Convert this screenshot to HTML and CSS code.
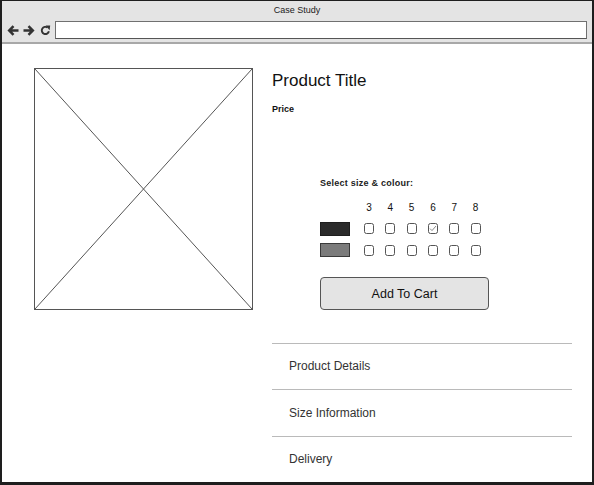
FILE: index.html
```html
<!DOCTYPE html>
<html>
<head>
<meta charset="utf-8">
<link rel="stylesheet" href="styles.css">
</head>
<body>
<div class="window">
  <div class="titlebar">Case Study</div>
  <div class="toolbar">
    <div class="nav">
      <svg class="ic-arrow" width="12" height="11" viewBox="0 0 12 11"><path d="M11.5 5.5H2.2M6.5 1.2L2.2 5.5L6.5 9.8" fill="none" stroke="#333" stroke-width="2.5"/></svg>
      <svg class="ic-arrow" width="12" height="11" viewBox="0 0 12 11"><path d="M0.5 5.5H9.8M5.5 1.2L9.8 5.5L5.5 9.8" fill="none" stroke="#333" stroke-width="2.5"/></svg>
      <svg class="ic-reload" width="11" height="11" viewBox="0 0 11 11"><path d="M8.9 6.2A3.6 3.6 0 1 1 7.6 2.6" fill="none" stroke="#333" stroke-width="1.9"/><path d="M5.6 0.4L10.2 0.6L9.6 5.2Z" fill="#333"/></svg>
    </div>
    <div class="address"></div>
  </div>
  <div class="page">
    <div class="image">
      <svg width="217" height="240" viewBox="0 0 217 240"><line x1="0" y1="0" x2="217" y2="240" stroke="#555" stroke-width="1"/><line x1="217" y1="0" x2="0" y2="240" stroke="#555" stroke-width="1"/></svg>
    </div>
    <div class="info">
      <h1 class="title">Product Title</h1>
      <div class="price">Price</div>
      <div class="options">
        <div class="label">Select size &amp; colour:</div>
        <div class="grid">
          <span></span>
          <span class="size">3</span><span class="size">4</span><span class="size">5</span><span class="size">6</span><span class="size">7</span><span class="size">8</span>
          <span class="swatch dark"></span>
          <span class="cb"></span><span class="cb"></span><span class="cb"></span>
          <span class="cb"><svg width="8" height="7" viewBox="0 0 8 7"><path d="M1 3.6L3 5.6L7 1" fill="none" stroke="#8a8a8a" stroke-width="1"/></svg></span>
          <span class="cb"></span><span class="cb"></span>
          <span class="swatch mid"></span>
          <span class="cb"></span><span class="cb"></span><span class="cb"></span><span class="cb"></span><span class="cb"></span><span class="cb"></span>
        </div>
        <button class="cart">Add To Cart</button>
      </div>
      <div class="accordion">
        <div class="acc-item">Product Details</div>
        <div class="acc-item">Size Information</div>
        <div class="acc-item">Delivery</div>
      </div>
    </div>
  </div>
</div>
</body>
</html>
```
FILE: styles.css
```css
html, body {
  margin: 0;
  padding: 0;
  background: #fff;
}
body {
  font-family: "Liberation Sans", Arial, sans-serif;
  color: #111;
}
.window {
  width: 594px;
  height: 485px;
  box-sizing: border-box;
  border: 2px solid #1e1e1e;
  border-top-width: 1px;
  border-bottom-width: 3px;
  overflow: hidden;
  background: #fff;
}
.titlebar {
  height: 19px;
  line-height: 19px;
  font-size: 9px;
  text-align: center;
  background: #e4e4e4;
  color: #222;
}
.toolbar {
  height: 22px;
  display: flex;
  align-items: flex-start;
  background: #e4e4e4;
  border-bottom: 2px solid #a8a8a8;
}
.nav {
  display: flex;
  align-items: center;
  padding: 4px 0 0 5px;
}
.nav svg { display: block; }
.nav .ic-arrow + .ic-arrow { margin-left: 4px; }
.nav .ic-reload { margin-left: 5px; margin-top: 1px; }
.address {
  flex: 1;
  margin: 1px 5px 0 4px;
  height: 18px;
  box-sizing: border-box;
  border: 1px solid #707070;
  border-bottom-color: #555;
  background: #fff;
}
.page {
  display: flex;
  align-items: flex-start;
  padding: 24px 0 0 32px;
  gap: 19px;
}
.image {
  flex: none;
  width: 219px;
  height: 242px;
  box-sizing: border-box;
  border: 1px solid #555;
}
.image svg { display: block; }
.info {
  flex: none;
  width: 300px;
}
.title {
  margin: 2px 0 0;
  font-size: 17px;
  font-weight: normal;
  line-height: 22px;
  color: #111;
}
.price {
  margin-top: 12px;
  font-size: 9px;
  font-weight: bold;
  line-height: 11px;
}
.options {
  margin-left: 48px;
}
.label {
  margin-top: 62.5px;
  font-size: 9px;
  font-weight: bold;
  line-height: 11px;
  letter-spacing: 0.25px;
  color: #222;
}
.grid {
  margin-top: 8.4px;
  display: grid;
  grid-template-columns: 38.4px repeat(6, 21.3px);
  grid-auto-rows: 21.3px;
  align-items: center;
}
.size {
  font-size: 10px;
  line-height: 12px;
  text-align: center;
  color: #111;
}
.swatch {
  width: 30px;
  height: 14px;
  box-sizing: border-box;
}
.swatch.dark { background: #2b2b2b; border: 1px solid #1e1e1e; }
.swatch.mid { background: #7b7b7b; border: 1px solid #3a3a3a; }
.cb {
  justify-self: center;
  width: 10px;
  height: 11px;
  box-sizing: border-box;
  border: 1px solid #555;
  border-radius: 2.5px;
  background: #fff;
  display: flex;
  align-items: center;
  justify-content: center;
}
.cb svg { display: block; }
.cart {
  display: block;
  margin-top: 16.5px;
  width: 169px;
  height: 33px;
  box-sizing: border-box;
  border: 1px solid #555;
  border-radius: 4px;
  background: #e4e4e4;
  font-family: "Liberation Sans", Arial, sans-serif;
  font-size: 12.5px;
  color: #111;
  padding: 0;
}
.accordion {
  margin-top: 32.7px;
}
.acc-item {
  border-top: 1px solid #bababa;
  padding: 15.5px 0 16px 17px;
  font-size: 12px;
  line-height: 14px;
  color: #333;
}
```
